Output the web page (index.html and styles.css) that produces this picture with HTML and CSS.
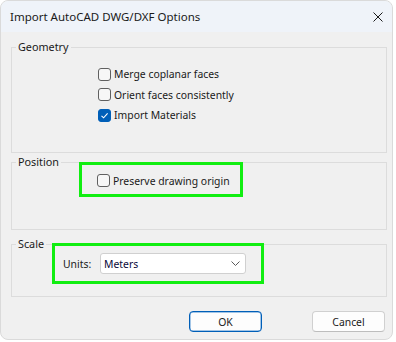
FILE: index.html
```html
<!DOCTYPE html>
<html>
<head>
<meta charset="utf-8">
<link rel="stylesheet" href="styles.css">
</head>
<body>
<div class="window">
  <div class="titlebar">
    <span class="title">Import AutoCAD DWG/DXF Options</span>
    <svg class="close" width="10" height="10" viewBox="0 0 10 10"><path d="M0.5 0.5 L9.5 9.5 M9.5 0.5 L0.5 9.5" stroke="#1a1a1a" stroke-width="1" fill="none"/></svg>
  </div>
  <div class="content">
    <fieldset class="group geometry">
      <legend>Geometry</legend>
      <div class="checks">
        <label class="check"><span class="box"></span><span>Merge coplanar faces</span></label>
        <label class="check"><span class="box"></span><span>Orient faces consistently</span></label>
        <label class="check"><span class="box checked"><svg width="13" height="13" viewBox="0 0 13 13"><path d="M3.5 6.8 L5.6 8.8 L9.6 4.4" stroke="#ffffff" stroke-width="1.1" fill="none"/></svg></span><span>Import Materials</span></label>
      </div>
    </fieldset>
    <fieldset class="group position">
      <legend>Position</legend>
      <div class="highlight hl-position">
        <label class="check"><span class="box"></span><span>Preserve drawing origin</span></label>
      </div>
    </fieldset>
    <fieldset class="group scale">
      <legend>Scale</legend>
      <div class="highlight hl-scale">
        <span class="units-label">Units:</span>
        <div class="select">
          <span>Meters</span>
          <svg width="9" height="5" viewBox="0 0 9 5"><path d="M0.5 0.5 L4.5 4.5 L8.5 0.5" stroke="#5a5a5a" stroke-width="1" fill="none"/></svg>
        </div>
      </div>
    </fieldset>
    <div class="buttons">
      <button class="btn primary">OK</button>
      <button class="btn">Cancel</button>
    </div>
  </div>
</div>
</body>
</html>
```
FILE: styles.css
```css
html, body {
  margin: 0;
  padding: 0;
  background: #ffffff;
}
body {
  font-family: "Segoe UI", "Noto Sans", sans-serif;
  font-size: 10.4px;
  color: #1a1a1a;
}
.window {
  width: 393px;
  height: 340px;
  box-sizing: border-box;
  border: 1px solid #dadada;
  border-radius: 8px;
  background: #f0f0f0;
  overflow: hidden;
  display: flex;
  flex-direction: column;
}
.titlebar {
  height: 31px;
  flex: none;
  background: #eff3f9;
  display: flex;
  align-items: center;
  justify-content: space-between;
  padding: 0 9px 0 9px;
}
.title {
  font-size: 11.5px;
  color: #1a1a1a;
}
.close {
  display: block;
}
.content {
  padding: 7px 6px 0 10px;
  display: flex;
  flex-direction: column;
}
.group {
  margin: 0;
  padding: 0;
  min-width: 0;
  width: 376px;
  box-sizing: border-box;
  border: 1px solid #dcdcdc;
}
.group legend {
  padding: 0 2px;
  margin-left: 4px;
  line-height: 16px;
  font-size: 10.8px;
}
.geometry {
  height: 114px;
}
.position {
  height: 76px;
  margin-top: 1px;
}
.scale {
  height: 61px;
  margin-top: 6px;
}
.checks {
  padding: 9px 0 0 86px;
  display: flex;
  flex-direction: column;
}
.check {
  height: 20.5px;
  display: flex;
  align-items: center;
  gap: 3px;
}
.box {
  width: 13px;
  height: 13px;
  box-sizing: border-box;
  border: 1px solid #606060;
  border-radius: 3px;
  background: #f7f7f7;
  display: block;
  flex: none;
  position: relative;
}
.box.checked {
  background: #005fb8;
  border-color: #005fb8;
}
.box.checked svg {
  display: block;
  margin: -1px;
}
.highlight {
  border: 3px solid #11ee11;
  box-sizing: border-box;
  display: flex;
  align-items: center;
}
.hl-position {
  width: 164px;
  height: 35px;
  margin: -8px 0 0 67px;
  padding: 2px 0 0 15px;
}
.hl-scale {
  width: 212px;
  height: 41px;
  margin: -9px 0 0 40px;
  padding: 0 0 0 8px;
}
.units-label {
  width: 37px;
  flex: none;
}
.select {
  width: 146px;
  height: 21px;
  box-sizing: border-box;
  border: 1px solid #d0d0d0;
  border-radius: 3px;
  background: #ffffff;
  display: flex;
  align-items: center;
  justify-content: space-between;
  padding: 0 5px 0 3px;
  color: #0a0a3a;
}
.select svg {
  display: block;
}
.buttons {
  display: flex;
  justify-content: flex-end;
  gap: 50px;
  margin-top: 14px;
  margin-right: 1px;
}
.btn {
  width: 73px;
  height: 21px;
  box-sizing: border-box;
  border: 1px solid #d0d0d0;
  border-bottom-color: #bdbdbd;
  border-radius: 4px;
  background: #fdfdfd;
  font-family: "Segoe UI", "Noto Sans", sans-serif;
  font-size: 10.4px;
  color: #1a1a1a;
  padding: 0;
  margin: 0;
}
.btn.primary {
  border: 1px solid #005fb8;
  box-shadow: inset 0 0 0 0.5px #4a8ed0;
}
```
